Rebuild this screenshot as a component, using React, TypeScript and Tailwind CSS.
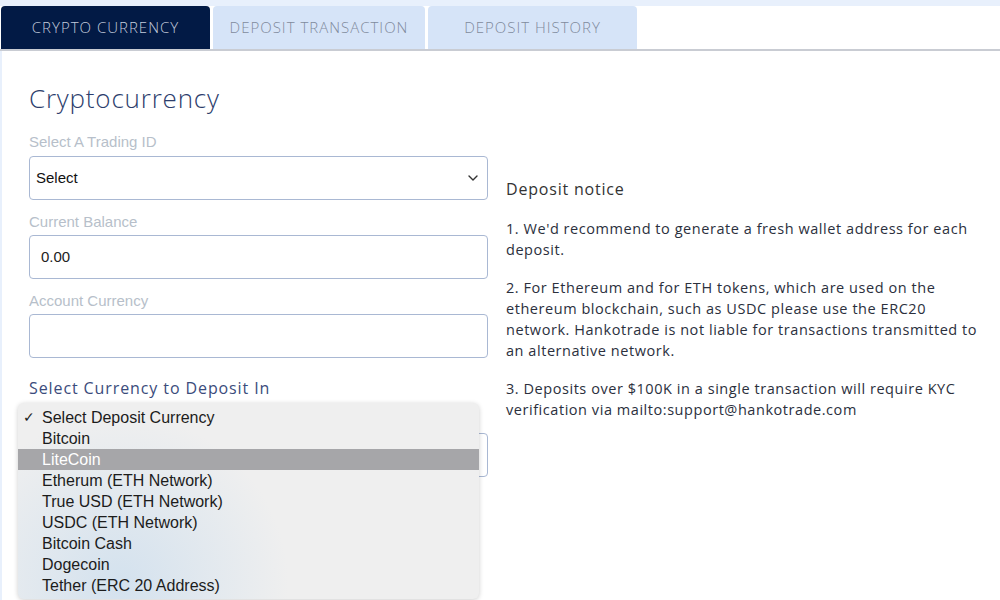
import React from "react";

const options = [
  "Select Deposit Currency",
  "Bitcoin",
  "LiteCoin",
  "Etherum (ETH Network)",
  "True USD (ETH Network)",
  "USDC (ETH Network)",
  "Bitcoin Cash",
  "Dogecoin",
  "Tether (ERC 20 Address)",
];

function Chevron() {
  return (
    <svg width="10" height="6" viewBox="0 0 10 6" fill="none">
      <path d="M1 1l4 4 4-4" stroke="#333" strokeWidth="1.4" strokeLinecap="round" strokeLinejoin="round" />
    </svg>
  );
}

export default function App() {
  const geo = { fontFamily: "'Open Sans', 'Noto Sans', sans-serif" };
  return (
    <div className="w-[1000px] h-[600px] overflow-hidden bg-white relative" style={{ fontFamily: "'Liberation Sans', Arial, sans-serif" }}>
      <div className="h-[6px] bg-[#e8f0fc]" />
      <div className="flex items-end h-[45px] border-b-2 border-[#c9ccd3] pl-[1px] gap-[3px]" style={geo}>
        <div className="w-[209px] h-full bg-[#021a45] rounded-t-[4px] flex items-center justify-center text-[15px] font-light tracking-[1px] text-[#c3cbdc]">
          CRYPTO CURRENCY
        </div>
        <div className="w-[212px] h-full bg-[#d6e4f8] rounded-t-[4px] flex items-center justify-center text-[15px] font-light tracking-[1px] text-[#7f8a9c]">
          DEPOSIT TRANSACTION
        </div>
        <div className="w-[209px] h-full bg-[#d6e4f8] rounded-t-[4px] flex items-center justify-center text-[15px] font-light tracking-[1px] text-[#7f8a9c]">
          DEPOSIT HISTORY
        </div>
      </div>
      <div className="flex border-l-2 border-[#e8f0fc] h-[549px]">
        <div className="w-[459px] ml-[27px] shrink-0">
          <h1 className="mt-[29px] text-[26px] leading-[36px] font-light tracking-[0.8px] text-[#2c3d6c]" style={geo}>
            Cryptocurrency
          </h1>
          <div className="mt-[16px] text-[15px] leading-[20px] text-[#b7bfca]">Select A Trading ID</div>
          <div className="mt-[4px] h-[44px] border border-[#a9b8d3] rounded-[4px] flex items-center justify-between pl-[6px] pr-[9px] text-[15px] text-[#111]">
            <span>Select</span>
            <Chevron />
          </div>
          <div className="mt-[12px] text-[15px] leading-[20px] text-[#b7bfca]">Current Balance</div>
          <div className="mt-[3px] h-[44px] border border-[#a9b8d3] rounded-[4px] flex items-center pl-[11px] text-[15px] text-[#222]">
            0.00
          </div>
          <div className="mt-[12px] text-[15px] leading-[20px] text-[#b7bfca]">Account Currency</div>
          <div className="mt-[3px] h-[44px] border border-[#a9b8d3] rounded-[4px]" />
          <div className="mt-[19px] text-[16px] leading-[22px] tracking-[0.9px] text-[#3b4c7c]" style={geo}>
            Select Currency to Deposit In
          </div>
          <div className="relative mt-[34px] h-[44px] border border-[#a9b8d3] rounded-[4px]">
            <div className="absolute left-[-12px] top-[-31px] w-[461px] h-[196px] rounded-[6px] bg-[#efefef] shadow-[0_1px_5px_rgba(0,0,0,0.2)] overflow-hidden pt-[4px]">
              <div className="absolute inset-0 bg-[radial-gradient(circle_at_22%_92%,rgba(200,220,238,0.7),rgba(239,239,239,0)_42%)]" />
              <div className="relative">
                {options.map((o, i) => (
                  <div
                    key={o}
                    className={
                      "h-[21px] flex items-center text-[16px] " +
                      (i === 2 ? "bg-[#a6a6a9] text-white" : "text-[#1c1c1c]")
                    }
                  >
                    <span className="w-[24px] pl-[5px] text-[14px]">{i === 0 ? "✓" : ""}</span>
                    <span>{o}</span>
                  </div>
                ))}
              </div>
            </div>
          </div>
        </div>
        <div className="ml-[18px] mt-[127px] w-[475px] text-[#2b303d] whitespace-nowrap tracking-[0.55px]" style={geo}>
          <div className="text-[16px] leading-[22px] text-[#333] tracking-[0.8px]">Deposit notice</div>
          <p className="mt-[18px] text-[14.5px] leading-[21px]">
            1. We'd recommend to generate a fresh wallet address for each
            <br />
            deposit.
          </p>
          <p className="mt-[17px] text-[14.5px] leading-[21px]">
            2. For Ethereum and for ETH tokens, which are used on the
            <br />
            ethereum blockchain, such as USDC please use the ERC20
            <br />
            network. Hankotrade is not liable for transactions transmitted to
            <br />
            an alternative network.
          </p>
          <p className="mt-[17px] text-[14.5px] leading-[21px]">
            3. Deposits over $100K in a single transaction will require KYC
            <br />
            verification via mailto:support@hankotrade.com
          </p>
        </div>
      </div>
    </div>
  );
}
